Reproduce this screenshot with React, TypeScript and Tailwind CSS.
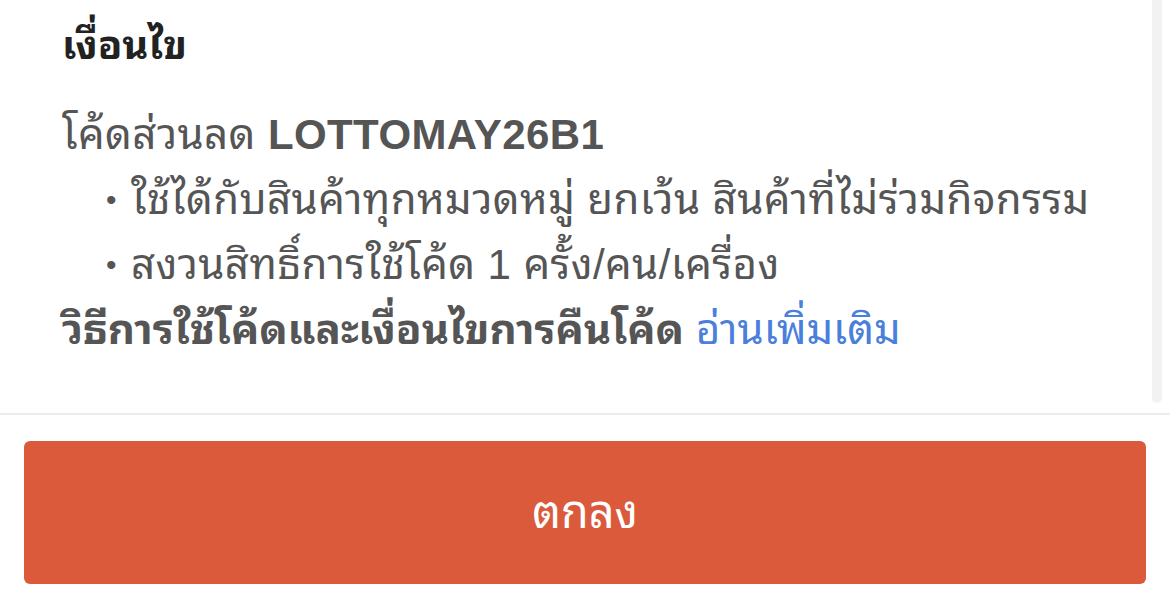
export default function App() {
  return (
    <div
      className="w-[1170px] h-[609px] bg-white flex flex-col overflow-hidden"
      style={{ fontFamily: '"Liberation Sans", "Noto Sans Thai Looped", "Noto Sans Thai", "Noto Sans", sans-serif' }}
    >
      <div className="relative h-[413px] shrink-0">
        <div className="px-[62px] pt-[16px]">
          <h2 className="text-[40px] font-bold text-[#222222] leading-[58px]">เงื่อนไข</h2>
          <div className="mt-[28px] text-[42px] tracking-[0.4px] text-[#555555] leading-[65px]">
            <p>
              โค้ดส่วนลด <span className="font-bold">LOTTOMAY26B1</span>
            </p>
            <ul className="pl-[44px]">
              <li className="flex items-center gap-[14px]">
                <span className="text-[30px] leading-[65px]">•</span>
                <span>ใช้ได้กับสินค้าทุกหมวดหมู่ ยกเว้น สินค้าที่ไม่ร่วมกิจกรรม</span>
              </li>
              <li className="flex items-center gap-[14px]">
                <span className="text-[30px] leading-[65px]">•</span>
                <span>สงวนสิทธิ์การใช้โค้ด 1 ครั้ง/คน/เครื่อง</span>
              </li>
            </ul>
            <p className="font-bold tracking-normal">
              วิธีการใช้โค้ดและเงื่อนไขการคืนโค้ด{' '}
              <span className="font-normal text-[#4a7fdc]">อ่านเพิ่มเติม</span>
            </p>
          </div>
        </div>
        <div className="absolute right-[8px] top-0 w-[10px] h-[403px] rounded-b-full bg-[#f2f2f2]" />
      </div>
      <div className="h-[2px] bg-[#ececec]" />
      <div className="px-[24px] pt-[26px]">
        <button className="w-full h-[143px] rounded-[6px] bg-[#db5a3b] text-white text-[45px] flex items-center justify-center">
          ตกลง
        </button>
      </div>
    </div>
  );
}
